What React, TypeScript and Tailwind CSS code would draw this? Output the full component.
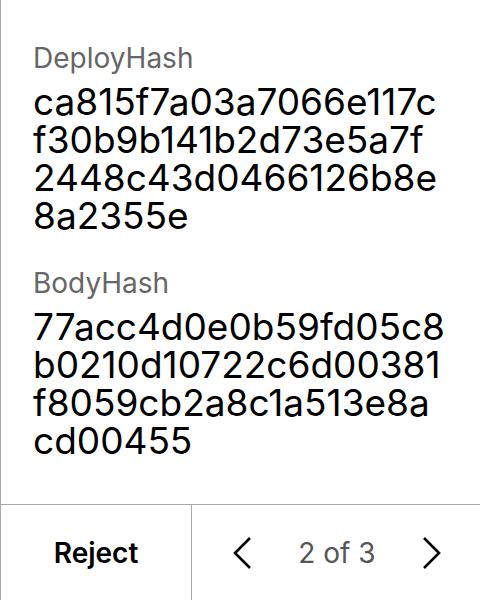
import React from "react";

export default function App() {
  return (
    <div
      className="w-[480px] h-[600px] bg-white flex flex-col border-l border-[#a8a8a8] text-black"
      style={{ fontFamily: "Inter, 'Noto Sans', sans-serif" }}
    >
      <div className="flex-1 pl-[32px] pr-[34px] pt-[41px] flex flex-col gap-[31px]">
        <div className="flex flex-col gap-[8px]">
          <div className="text-[28px] leading-[34px] text-[#666666]">DeployHash</div>
          <div className="text-[37px] leading-[38px] break-all">
            ca815f7a03a7066e117cf30b9b141b2d73e5a7f2448c43d0466126b8e8a2355e
          </div>
        </div>
        <div className="flex flex-col gap-[8px]">
          <div className="text-[28px] leading-[34px] text-[#666666]">BodyHash</div>
          <div className="text-[37px] leading-[38px] break-all">
            77acc4d0e0b59fd05c8b0210d10722c6d00381f8059cb2a8c1a513e8acd00455
          </div>
        </div>
      </div>
      <div className="h-[96px] flex border-t border-[#a8a8a8]">
        <div className="w-[191px] flex items-center justify-center border-r border-[#a8a8a8]">
          <span className="text-[28px] font-semibold">Reject</span>
        </div>
        <div className="flex-1 flex items-center justify-between pl-[40px] pr-[38px]">
          <svg width="20" height="34" viewBox="0 0 20 34" fill="none">
            <path d="M18 2 L3 17 L18 32" stroke="black" strokeWidth="2.6" />
          </svg>
          <span className="text-[28px] text-[#555555]">2 of 3</span>
          <svg width="20" height="34" viewBox="0 0 20 34" fill="none">
            <path d="M2 2 L17 17 L2 32" stroke="black" strokeWidth="2.6" />
          </svg>
        </div>
      </div>
    </div>
  );
}
